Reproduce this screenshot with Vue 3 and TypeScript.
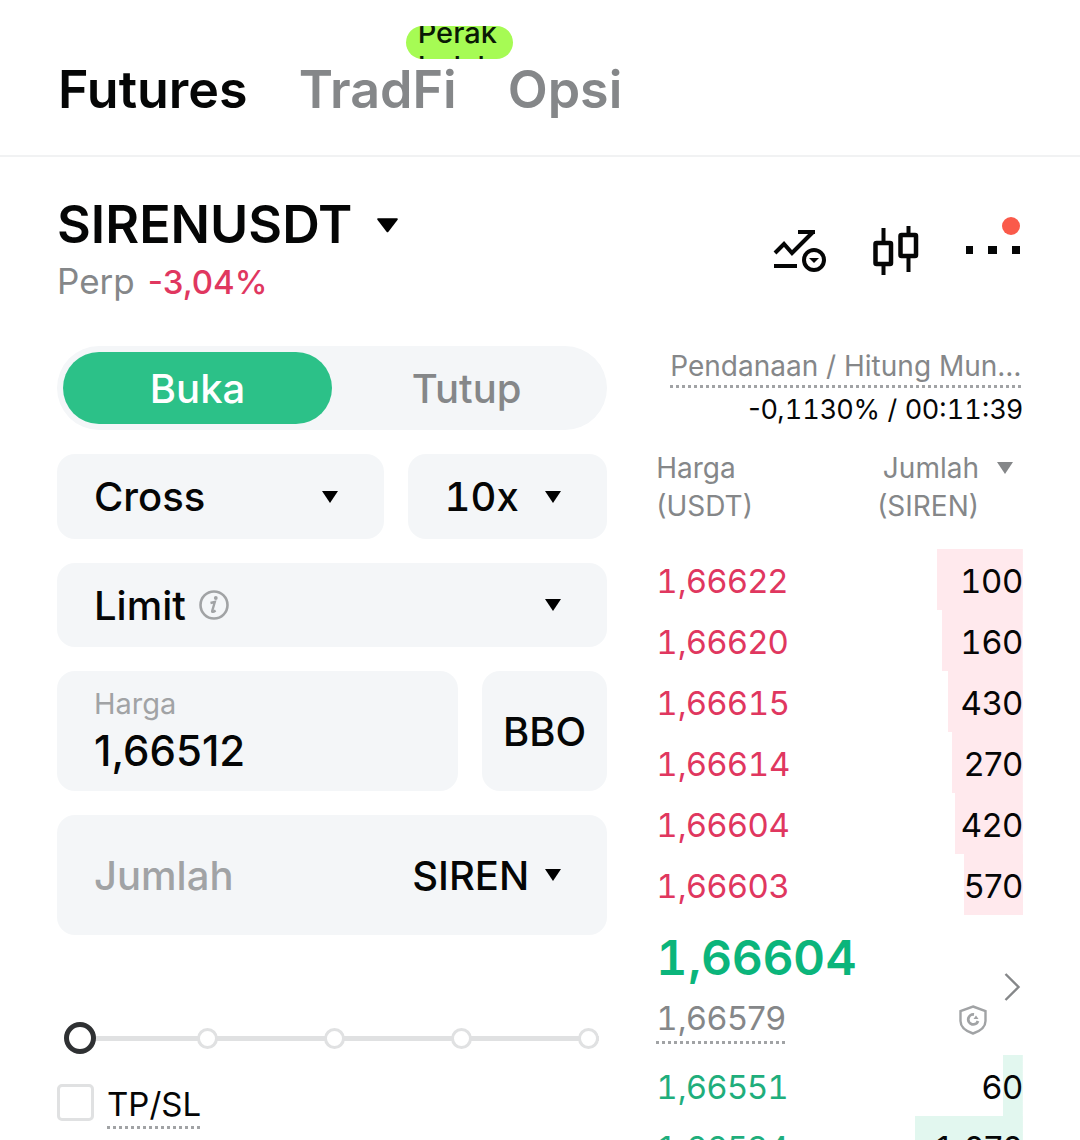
<script setup lang="ts">
import { h, ref } from 'vue'

interface Level {
  price: string
  amount: string
  depth: number
}

const Figure = (props: { value: string }) =>
  h(
    'span',
    props.value.split(/(1+)/).map((part) => (part.startsWith('1') ? h('span', { class: 'one' }, part) : part)),
  )
Figure.props = ['value']

const asks: Level[] = [
  { price: '1,66622', amount: '100', depth: 23.4 },
  { price: '1,66620', amount: '160', depth: 22 },
  { price: '1,66615', amount: '430', depth: 20.4 },
  { price: '1,66614', amount: '270', depth: 19.3 },
  { price: '1,66604', amount: '420', depth: 18.5 },
  { price: '1,66603', amount: '570', depth: 16.1 },
]

const bids: Level[] = [
  { price: '1,66551', amount: '60', depth: 5.4 },
  { price: '1,66534', amount: '1.070', depth: 29.4 },
]

const side = ref<'open' | 'close'>('open')
const price = ref('1,66512')
const amount = ref('')
const percent = ref(0)
const tpsl = ref(false)
</script>

<template>
  <div class="screen">
    <header class="top">
      <nav class="markets">
        <a href="#futures" class="market current">Futures</a>
        <a href="#tradfi" class="market">TradFi<span class="badge">Perak Indah</span></a>
        <a href="#opsi" class="market">Opsi</a>
      </nav>
    </header>

    <section class="pair">
      <div>
        <button class="symbol" type="button">
          <h1>SIRENUSDT</h1>
          <svg class="symbol-caret" viewBox="0 0 22 15"><path d="M1 0h20a1 1 0 0 1 .6 1.400L12 14a1.300 1.300 0 0 1-2 0L.4 1.400A1 1 0 0 1 1 0z" /></svg>
        </button>
        <p class="meta"><span>Perp</span><Figure class="change" value="-3,04%" /></p>
      </div>
      <div class="tools">
        <button type="button" aria-label="Data">
          <svg width="54" height="43" viewBox="0 0 54 43" fill="none" stroke="#050606" stroke-width="4">
            <path d="M2 24l9-9 8 9L40 3M25 3h17M1 37h23" />
            <circle cx="41" cy="31" r="10" />
            <path d="M36 29h10l-5 5z" fill="#050606" stroke="none" />
          </svg>
        </button>
        <button type="button" aria-label="Chart">
          <svg width="46" height="50" viewBox="0 0 46 50" fill="none" stroke="#050606" stroke-width="4">
            <rect x="2.500" y="18" width="15.500" height="21" rx="1" stroke-width="4.500" />
            <path d="M10.500 3v16M10.500 39v11M35.500 1v10M35.500 31v16" />
            <rect x="27.500" y="10" width="15.500" height="21" rx="1" stroke-width="4.500" />
          </svg>
        </button>
        <button class="more" type="button" aria-label="Menu">
          <svg width="56" height="8" viewBox="0 0 56 8" fill="#050606"><path d="M1 0h7v8H1zM23 0h9v8h-9zM47 0h8v8h-8z" /></svg>
          <span class="alert"></span>
        </button>
      </div>
    </section>

    <main class="trade">
      <form class="order" @submit.prevent>
        <div class="sides">
          <button type="button" :class="{ active: side === 'open' }" @click="side = 'open'">Buka</button>
          <button type="button" :class="{ active: side === 'close' }" @click="side = 'close'">Tutup</button>
        </div>

        <div class="row modes">
          <div class="box">
            <select aria-label="Mode margin"><option>Cross</option><option>Isolated</option></select>
            <svg class="caret" viewBox="0 0 16 12"><path d="M0 0h16L8 12z" /></svg>
          </div>
          <div class="box">
            <select class="leverage" aria-label="Leverage"><option>10x</option><option>20x</option></select>
            <svg class="caret" viewBox="0 0 16 12"><path d="M0 0h16L8 12z" /></svg>
          </div>
        </div>

        <div class="box">
          <select class="kind" aria-label="Tipe order"><option>Limit</option><option>Market</option></select>
          <svg class="info" width="30" height="30" viewBox="0 0 30 30" fill="none" stroke="#a1a3a5">
            <circle cx="15" cy="15" r="13.500" stroke-width="2.600" />
            <circle cx="16.800" cy="8" r="1.900" fill="#a1a3a5" stroke="none" />
            <path d="M11.500 13l4.300-1-2.600 9q-.4 2 3.400-.6" stroke-width="2.400" />
          </svg>
          <svg class="caret" viewBox="0 0 16 12"><path d="M0 0h16L8 12z" /></svg>
        </div>

        <div class="row">
          <div class="field">
            <label for="price">Harga</label>
            <input id="price" v-model="price" type="text" inputmode="decimal" />
          </div>
          <button class="bbo" type="button">BBO</button>
        </div>

        <div class="box tall">
          <input v-model="amount" type="text" placeholder="Jumlah" aria-label="Jumlah" />
          <select class="unit" aria-label="Satuan"><option>SIREN</option><option>USDT</option></select>
          <svg class="caret" viewBox="0 0 16 12"><path d="M0 0h16L8 12z" /></svg>
        </div>

        <div class="slider">
          <div class="ticks"><i v-for="n in 5" :key="n"></i></div>
          <input v-model="percent" type="range" min="0" max="100" aria-label="Persentase" />
        </div>

        <label class="tpsl">
          <input v-model="tpsl" type="checkbox" />
          <span class="dotted">TP/SL</span>
        </label>
      </form>

      <section class="book">
        <div class="funding">
          <p class="funding-label dotted">Pendanaan / Hitung Mundur</p>
          <p class="funding-value"><Figure value="-0,1130% / 00:11:39" /></p>
        </div>

        <table>
          <thead>
            <tr>
              <th>Harga<br />(USDT)</th>
              <th>
                <div class="amount-head">
                  <span>Jumlah<br />(SIREN)</span>
                  <svg width="16" height="12" viewBox="0 0 16 12"><path d="M0 0h16L8 12z" fill="#858789" /></svg>
                </div>
              </th>
            </tr>
          </thead>
          <tbody class="asks">
            <tr v-for="l in asks" :key="l.price" :style="{ '--depth': l.depth + '%' }">
              <td><Figure :value="l.price" /></td>
              <td><Figure :value="l.amount" /></td>
            </tr>
          </tbody>
        </table>

        <div class="last">
          <div>
            <strong><Figure value="1,66604" /></strong>
            <Figure class="mark dotted" value="1,66579" />
          </div>
          <div class="last-icons">
            <svg width="28" height="30" viewBox="0 0 28 30" fill="none" stroke="#a1a3a5" stroke-width="2.400">
              <path d="M14 1.500L26.500 6v10c0 6-5 10-12.500 12.500C6.500 26 1.500 22 1.500 16V6z" />
              <path d="M15 9.500a5 5 0 1 0 4 6.500" stroke-width="2.800" />
              <path d="M14.500 14l2.500-3.500 2.500 3.500z" fill="#a1a3a5" stroke="none" />
            </svg>
            <svg class="chevron" width="17" height="28" viewBox="0 0 17 28" fill="none" stroke="#858789" stroke-width="2.400"><path d="M1.500 1L14.500 14 1.500 27" /></svg>
          </div>
        </div>

        <table>
          <tbody class="bids">
            <tr v-for="l in bids" :key="l.price" :style="{ '--depth': l.depth + '%' }">
              <td><Figure :value="l.price" /></td>
              <td><Figure :value="l.amount" /></td>
            </tr>
          </tbody>
        </table>
      </section>
    </main>
  </div>
</template>

<style>
body {
  margin: 0;
  background: #fff;
}
</style>

<style scoped>
.screen {
  height: 100vh;
  overflow: hidden;
  color: #050606;
  font-family: Inter, "Liberation Sans", sans-serif;
}
.screen * {
  box-sizing: border-box;
}
.screen :deep(.one),
.box .leverage {
  font-variant-numeric: tabular-nums;
}
p,
h1 {
  margin: 0;
}
button,
input,
select {
  margin: 0;
  padding: 0;
  border: 0;
  background: none;
  color: inherit;
  font: inherit;
  outline: none;
}
select {
  appearance: none;
  field-sizing: content;
}
svg {
  display: block;
  flex: none;
}

.top {
  padding: 57px 58px 33px;
  border-bottom: 2px solid #f1f2f3;
}
.markets {
  display: flex;
  gap: 51px;
}
.market {
  position: relative;
  color: #858789;
  font-size: 52px;
  font-weight: 600;
  line-height: 65px;
  text-decoration: none;
}
.market.current {
  color: #050606;
}
.badge {
  position: absolute;
  top: -31px;
  left: 107px;
  display: flex;
  align-items: center;
  width: 107px;
  height: 33px;
  padding: 15px 12px 0;
  overflow: hidden;
  border-radius: 17px;
  background: #a6fb54;
  color: #0a1a05;
  font-size: 29px;
  font-weight: 500;
  line-height: 34px;
}

.pair {
  display: flex;
  justify-content: space-between;
  align-items: flex-start;
  padding: 36px 59px 0 57px;
}
.symbol {
  display: flex;
  align-items: center;
  gap: 25px;
}
.symbol h1 {
  font-size: 52px;
  font-weight: 600;
  line-height: 64px;
}
.symbol-caret {
  width: 21px;
  height: 15px;
}
.meta {
  display: flex;
  align-items: baseline;
  gap: 13px;
  color: #858789;
  font-size: 35px;
  line-height: 48px;
}
.change {
  color: #e0375f;
  font-size: 33px;
  font-weight: 500;
}
.tools {
  display: flex;
  align-items: center;
  gap: 46px;
  padding-top: 32px;
}
.more {
  position: relative;
}
.alert {
  position: absolute;
  top: -29px;
  right: 1px;
  width: 18px;
  height: 18px;
  border-radius: 50%;
  background: #fa5a4a;
}

.trade {
  display: grid;
  grid-template-columns: 3fr 2fr;
  gap: 49px;
  padding: 40px 57px 0;
}
.order {
  display: flex;
  flex-direction: column;
  gap: 24px;
  min-width: 0;
}
.sides {
  display: flex;
  height: 84px;
  padding: 6px;
  border-radius: 42px;
  background: #f4f6f8;
}
.sides button {
  flex: 1;
  border-radius: 36px;
  color: #858789;
  font-size: 40px;
  font-weight: 500;
}
.sides button.active {
  background: #2cc188;
  color: #fff;
}
.row {
  display: flex;
  gap: 24px;
}
.row.modes {
  display: grid;
  grid-template-columns: 18fr 11fr;
}
.box,
.field,
.bbo {
  border-radius: 18px;
  background: #f4f6f8;
}
.box {
  display: flex;
  align-items: center;
  height: 84px;
  padding: 0 46px 0 37px;
  font-size: 40px;
  font-weight: 500;
}
.modes .box {
  height: 85px;
}
.box select {
  flex: 1;
  min-width: 0;
}
.box select.kind,
.box select.unit {
  flex: none;
}
.caret {
  width: 16px;
  height: 12px;
}
.info {
  margin-left: 13px;
}
.info + .caret {
  margin-left: auto;
}
.field {
  display: flex;
  flex: 1;
  flex-direction: column;
  min-width: 0;
  height: 120px;
  padding: 14px 37px 0;
}
.field label {
  color: #a1a3a5;
  font-size: 29px;
  line-height: 38px;
}
.field input {
  width: 100%;
  font-size: 42px;
  font-weight: 500;
  line-height: 56px;
}
.bbo {
  padding: 0 21px;
  font-size: 40px;
  font-weight: 500;
}
.box.tall {
  height: 120px;
}
.box input {
  flex: 1;
  min-width: 0;
}
.box input::placeholder {
  color: #a1a3a5;
  opacity: 1;
}
.unit + .caret {
  margin-left: 16px;
}

.slider {
  display: grid;
  align-items: center;
  margin: 63px 8px 0 7px;
}
.slider > * {
  grid-area: 1 / 1;
}
.ticks {
  display: flex;
  justify-content: space-between;
  margin-left: 6px;
  background: linear-gradient(#e0e1e2, #e0e1e2) center / 100% 5px no-repeat;
}
.ticks i {
  width: 21px;
  height: 21px;
  border: 3px solid #e0e1e2;
  border-radius: 50%;
  background: #fff;
}
.slider input {
  appearance: none;
  width: 100%;
  height: 32px;
}
.slider input::-webkit-slider-thumb {
  appearance: none;
  width: 32px;
  height: 32px;
  border: 5px solid #2f3133;
  border-radius: 50%;
  background: #fff;
}
.tpsl {
  display: flex;
  align-items: flex-start;
  gap: 13px;
  font-size: 33px;
  line-height: 46px;
}
.tpsl input {
  appearance: none;
  width: 37px;
  height: 37px;
  margin-top: 6px;
  border: 3px solid #e0e1e2;
  border-radius: 5px;
}
.dotted {
  padding-bottom: 2px;
  background: repeating-linear-gradient(90deg, #a1a3a5 0 3px, transparent 3px 6px) left bottom / 100% 3px no-repeat;
}
.tpsl .dotted {
  padding-top: 3px;
}

.book {
  min-width: 0;
}
.funding {
  display: flex;
  flex-direction: column;
  align-items: flex-end;
  padding-left: 14px;
  font-size: 28px;
}
.funding-label {
  max-width: 100%;
  overflow: hidden;
  color: #858789;
  line-height: 40px;
  text-overflow: ellipsis;
  white-space: nowrap;
}
.funding-value {
  font-size: 27px;
  line-height: 44px;
  white-space: nowrap;
}
table {
  width: 100%;
  border-collapse: collapse;
}
th {
  padding: 17px 0 24px;
  color: #858789;
  font-size: 28px;
  font-weight: 400;
  line-height: 38px;
  text-align: left;
  vertical-align: top;
}
.amount-head {
  display: flex;
  justify-content: flex-end;
  gap: 18px;
  padding-right: 10px;
  text-align: right;
}
.amount-head svg {
  margin-top: 13px;
}
td {
  height: 61px;
  padding: 2px 0 0;
  font-size: 33px;
  line-height: 44px;
}
td:last-child {
  text-align: right;
}
.asks tr {
  background: linear-gradient(#ffe9ed, #ffe9ed) right / var(--depth) 100% no-repeat;
}
.bids tr {
  background: linear-gradient(#e2f7ef, #e2f7ef) right / var(--depth) 100% no-repeat;
}
.asks td:first-child {
  color: #e0375f;
}
.bids td:first-child {
  color: #1fae7c;
}
.last {
  display: flex;
  justify-content: space-between;
  padding: 10px 0 11px;
}
.last strong {
  display: block;
  color: #0bb57b;
  font-size: 48px;
  font-weight: 600;
  line-height: 66px;
}
.mark {
  display: inline-block;
  padding-top: 3px;
  color: #858789;
  font-size: 33px;
  line-height: 48px;
}
.last-icons {
  display: flex;
  align-items: flex-end;
  gap: 17px;
  padding: 0 2px 9px 0;
}
.chevron {
  margin-bottom: 34px;
}
</style>
